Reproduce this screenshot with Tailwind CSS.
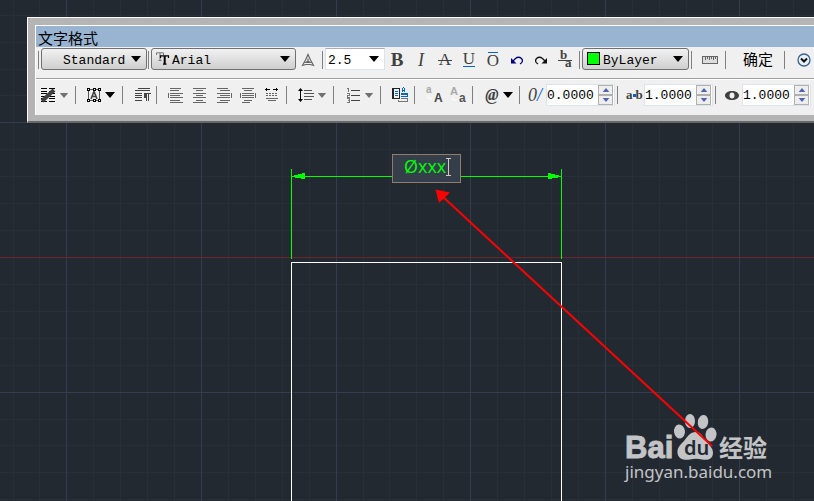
<!DOCTYPE html>
<html lang="zh-CN">
<head>
  <meta charset="UTF-8" />
  <meta name="viewport" content="width=device-width, initial-scale=1.0" />
  <title>文字格式</title>
  <script src="https://cdn.jsdelivr.net/npm/@tailwindcss/browser@4"></script>
</head>
<body class="relative min-h-screen overflow-hidden bg-[#222930] font-['Liberation_Mono','Noto_Sans_CJK_SC',monospace] text-[13px] text-black">

  <!-- shared icons -->
  <svg class="hidden">
    <symbol id="down" viewBox="0 0 10 6"><path d="M0 0h10L5 6z" fill="currentColor" /></symbol>
  </svg>

  <!-- drawing area -->
  <svg class="absolute inset-0 h-full w-full" shape-rendering="crispEdges">
    <path id="gridMinor" stroke="#272f3b" />
    <path id="gridMajor" stroke="#343c4d" />
    <path d="M0 257.500H2000" stroke="#67272d" />
    <path d="M291.500 169V259M561.500 169V259M292 176.500H561" fill="none" stroke="#00ff00" />
    <path d="M292 176.500L304.500 173.500V178.500ZM561 176.500L548.500 173.500V178.500Z" fill="#00ff00" stroke="#00ff00" />
    <path d="M291.500 520V262.500H561.500V520" fill="none" stroke="#fff" />
    <g shape-rendering="auto">
      <g fill="#c3c4c6">
        <ellipse cx="679.500" cy="431.500" rx="5.500" ry="7" transform="rotate(-8 679.500 431.500)" />
        <ellipse cx="690" cy="421" rx="5" ry="7" />
        <ellipse cx="703" cy="422" rx="5.200" ry="7" transform="rotate(10 703 422)" />
        <ellipse cx="711" cy="434.500" rx="5.500" ry="7" transform="rotate(8 711 434.500)" />
        <path d="M696 432C690 432 687 437 684 441C680 445 677 448 677.500 453C678 459 684 460.500 690 459.500C694 458.500 698 458.500 702 459.500C708 460.500 713 459 713 452.500C713 448 709 445 706 441C703 437 701 432 696 432Z" />
        <text x="625" y="458" font-size="31" font-weight="700" font-family="Liberation Sans, sans-serif" stroke="#c3c4c6">Bai</text>
        <text x="719" y="457" font-size="24" font-weight="700" font-family="Noto Sans CJK SC, sans-serif">经验</text>
        <text x="625" y="478" font-size="17" font-family="Noto Sans, sans-serif">jingyan.baidu.com</text>
      </g>
      <text x="684" y="455" font-size="20" font-weight="600" fill="#222930" font-family="Noto Sans, sans-serif">du</text>
      <path d="M442 196L712 446" stroke="#ff0000" stroke-width="2" />
      <path d="M435.500 189.500L450 192.500L439 203Z" fill="#ff0000" />
    </g>
  </svg>

  <!-- in-place text editor -->
  <input aria-label="标注文字" value="Øxxx" class="absolute left-[392px] top-[154px] h-[29px] w-[69px] border border-[#917c6b] bg-[#353f4c] pb-[6px] pl-[11px] font-['Open_Sans',sans-serif] text-[18px] text-[#00ff00]" />
  <svg class="absolute left-[446px] top-[158px] h-[18px] w-[5px]" shape-rendering="crispEdges"><path d="M0 .5h5M0 17.500h5M2.500 0v18" stroke="#d5cabb" /></svg>

  <!-- text formatting toolbar -->
  <section class="relative mt-[17px] ml-[27px] border-t border-b-2 border-l border-t-white border-b-[#686868] border-l-white bg-[#b4b4b4] pt-[7px] pb-[6px] pl-[7px]">
    <div class="border-t border-l border-white bg-[#f0f0f0]">
      <h1 class="h-[21px] overflow-hidden bg-[#99b4d1] pl-[2px] font-['Noto_Sans_CJK_SC',sans-serif] text-[15px] leading-[23px]">文字格式</h1>

      <div class="flex h-8 items-center border-b border-[#a0a0a0] pb-[6px] *:shrink-0">
        <span class="ml-[2px] h-[18px] w-px bg-[#808080]"></span>
        <div class="relative ml-[2px] w-[106px]">
          <select aria-label="样式" class="h-[22px] w-full appearance-none rounded-[3px] border border-[#707070] bg-linear-to-b from-[#f2f2f2] to-[#cfcfcf] pt-[2px] pl-[21px]"><option>Standard</option></select>
          <svg class="pointer-events-none absolute top-2 right-[6px] h-[6px] w-[10px]"><use href="#down" /></svg>
        </div>
        <span class="ml-px h-[18px] w-px bg-[#808080]"></span>
        <div class="relative ml-[2px] w-[145px]">
          <select aria-label="字体" class="h-[22px] w-full appearance-none rounded-[3px] border border-[#707070] bg-linear-to-b from-[#f2f2f2] to-[#cfcfcf] pt-[2px] pl-5"><option>Arial</option></select>
          <svg class="pointer-events-none absolute top-1 left-[5px] h-[14px] w-[14px]" viewBox="0 0 14 14" fill="none">
            <path d="M.5 3V.8h7V3M4 1v7M2.500 8.500h3" stroke="#777" />
            <path d="M4.500 6V3.800h8V6M7 12.200h3.500" stroke="#000" stroke-width="1.200" /><path d="M8.700 4v8" stroke="#000" stroke-width="2" />
          </svg>
          <svg class="pointer-events-none absolute top-2 right-[6px] h-[6px] w-[10px]"><use href="#down" /></svg>
        </div>
        <button aria-label="注释性" class="flex h-6 w-6 items-center justify-center">
          <svg class="h-[14px] w-[14px]" viewBox="0 0 14 14" fill="none" stroke="#666" stroke-width="1.200"><path d="M7 1.500L4.500 7L1.500 12.300L5 11.500H9L12.500 12.300L9.500 7ZM7 5.500V8M5 9.500L7 8L9 9.500Z" /></svg>
        </button>
        <span class="ml-[2px] h-[18px] w-px bg-[#808080]"></span>
        <div class="relative ml-[2px] w-[60px]">
          <select aria-label="文字高度" class="h-[22px] w-full appearance-none border border-[#dde3ec] border-t-[#abadb3] bg-white pt-[2px] pl-[2px]"><option>2.5</option></select>
          <svg class="pointer-events-none absolute top-2 right-[6px] h-[6px] w-[10px]"><use href="#down" /></svg>
        </div>
        <button class="h-6 w-6 font-['Liberation_Serif',serif] text-[19px] leading-6 font-bold text-[#404040]">B</button>
        <button class="h-6 w-6 font-['Liberation_Serif',serif] text-[18px] leading-6 text-[#404040] italic">I</button>
        <button aria-label="删除线" class="relative h-6 w-6 font-['Liberation_Serif',serif] text-[17px] leading-6 text-[#404040]">A<span class="absolute top-3 left-[5px] h-px w-[14px] bg-[#404040]"></span></button>
        <button aria-label="下划线" class="relative h-6 w-6 pb-[2px] font-['Liberation_Serif',serif] text-[17px] leading-[22px] text-[#404040]">U<span class="absolute bottom-[5px] left-[6px] h-px w-3 bg-[#0066cc]"></span></button>
        <button aria-label="上划线" class="relative h-6 w-6 pt-[2px] font-['Liberation_Serif',serif] text-[17px] leading-[22px] text-[#404040]">O<span class="absolute top-1 left-[7px] h-px w-[10px] bg-[#0066cc]"></span></button>
        <button aria-label="放弃" class="flex h-6 w-6 items-center justify-center">
          <svg class="h-[14px] w-[14px]" viewBox="0 0 14 14" fill="none" stroke="#000080" stroke-width="1.300"><path d="M3 8L5.500 5.500Q8.500 3 11.500 5.500Q14 8.500 10 11" /><path d="M1 5v5.500h5.500z" fill="#000080" stroke="none" /></svg>
        </button>
        <button aria-label="重做" class="flex h-6 w-6 items-center justify-center">
          <svg class="h-[14px] w-[14px]" viewBox="0 0 14 14" fill="none" stroke="#111" stroke-width="1.300"><path d="M11 8L8.500 5.500Q5.500 3 2.500 5.500Q0 8.500 4 11" /><path d="M13 5v5.500H7.500z" fill="#111" stroke="none" /></svg>
        </button>
        <button aria-label="堆叠" class="flex h-6 w-6 items-center justify-center">
          <svg class="h-4 w-4 overflow-visible" viewBox="0 0 16 16" fill="#404040" font-family="Liberation Serif, serif" font-weight="700" font-size="13"><text x="3" y="7">b</text><text x="8" y="15">a</text><path d="M1 8h14v1H1z" /></svg>
        </button>
        <span class="ml-[2px] h-[18px] w-px bg-[#808080]"></span>
        <div class="relative ml-[2px] w-[107px]">
          <select aria-label="颜色" class="h-[22px] w-full appearance-none rounded-[3px] border border-[#707070] bg-linear-to-b from-[#f2f2f2] to-[#cfcfcf] pt-[2px] pl-5"><option>ByLayer</option></select>
          <span class="pointer-events-none absolute top-1 left-[5px] h-[13px] w-[13px] border border-black bg-[#00ff00]"></span>
          <svg class="pointer-events-none absolute top-2 right-[6px] h-[6px] w-[10px]"><use href="#down" /></svg>
        </div>
        <span class="ml-[2px] h-[18px] w-px bg-[#808080]"></span>
        <button aria-label="标尺" class="ml-1 flex h-6 w-7 items-center justify-center">
          <svg class="h-2 w-4" viewBox="0 0 16 8" fill="none" stroke="#666" shape-rendering="crispEdges"><path d="M.5 .5h15v7H.5z" fill="#ddd" /><path d="M3.500 1v3M5.500 1v2M7.500 1v3M9.500 1v2M11.500 1v3M13.500 1v2" /></svg>
        </button>
        <span class="ml-px h-[18px] w-px bg-[#808080]"></span>
        <button class="h-6 w-[58px] pb-[2px] pl-[6px] font-['Noto_Sans_CJK_SC',sans-serif] text-[15px] leading-[22px]">确定</button>
        <span class="h-[18px] w-px bg-[#808080]"></span>
        <button aria-label="选项" class="ml-px flex h-6 w-9 items-center justify-center">
          <svg class="h-[14px] w-[14px]" viewBox="0 0 14 14" fill="none"><circle cx="7" cy="7" r="6" fill="#e8f1fa" stroke="#3c5f8c" stroke-width="1.300" /><path d="M4 5.500L7 8.500L10 5.500" stroke="#111" stroke-width="2" /></svg>
        </button>
      </div>

      <div class="flex h-9 items-center border-t border-white pb-[5px] *:shrink-0">
        <button aria-label="栏" class="ml-1 flex h-6 items-center gap-[3px] text-[#707070]">
          <svg class="h-4 w-4" viewBox="0 0 16 16" fill="none" stroke="#000"><path d="M1 1.500h6M9 1.500h6M1 4.500h6M9 4.500h6M1 6.500h6M9 6.500h6M1 9.500h6M9 9.500h6M1 11.500h6M9 11.500h6M1 14.500h6M9 14.500h6" shape-rendering="crispEdges" /><path d="M2 14L14 3" stroke="#404040" stroke-width="4" /></svg>
          <svg class="h-[5px] w-[10px]"><use href="#down" /></svg>
        </button>
        <span class="ml-[6px] h-[18px] w-px bg-[#808080]"></span>
        <button aria-label="多行文字对正" class="ml-[10px] flex h-6 items-center gap-[3px]">
          <svg class="h-4 w-4" viewBox="0 0 16 16" fill="none" stroke="#222"><path d="M2.500 2.500h11v11h-11z" stroke="#555" shape-rendering="crispEdges" /><path d="M5 12L8 4.500L11 12M6 9.500h4" stroke="#444" stroke-width="1.600" /><path d="M1.500 1.500h2v2h-2zM7.500 1.500h2v2h-2zM12.500 1.500h2v2h-2zM1.500 12.500h2v2h-2zM7.500 12.500h2v2h-2zM12.500 12.500h2v2h-2z" stroke="#000" fill="#fff" shape-rendering="crispEdges" /></svg>
          <svg class="h-[6px] w-[10px]"><use href="#down" /></svg>
        </button>
        <span class="ml-[7px] h-[18px] w-px bg-[#808080]"></span>
        <button aria-label="段落" class="ml-2 flex h-6 w-6 items-center justify-center">
          <svg class="h-4 w-4" viewBox="0 0 16 16" fill="none" stroke="#444" shape-rendering="crispEdges"><path d="M3 1.500h12M0 3.500h15M0 6.500h7M0 8.500h7M0 10.500h7M0 13.500h7M10 6.500h6M11.500 6v8M13.500 6v8" /><path d="M11 6H9v4h2z" fill="#444" /></svg>
        </button>
        <span class="ml-px h-[18px] w-px bg-[#808080]"></span>
        <button aria-label="左对齐" class="ml-[7px] flex h-6 w-6 items-center justify-center">
          <svg class="h-4 w-4" viewBox="0 0 16 16" stroke="#666" shape-rendering="crispEdges"><path d="M2 1.500h11M2 3.500h9M2 6.500h13M2 8.500h10M2 10.500h13M2 13.500h10M2 15.500h13M.5 6v5" /></svg>
        </button>
        <button aria-label="居中" class="flex h-6 w-6 items-center justify-center">
          <svg class="h-4 w-4" viewBox="0 0 16 16" stroke="#666" shape-rendering="crispEdges"><path d="M1 1.500h13M4 3.500h7M1 6.500h13M4 8.500h7M1 10.500h13M4 13.500h7M1 15.500h13" /></svg>
        </button>
        <button aria-label="右对齐" class="flex h-6 w-6 items-center justify-center">
          <svg class="h-4 w-4" viewBox="0 0 16 16" stroke="#666" shape-rendering="crispEdges"><path d="M1 1.500h11M4 3.500h10M1 6.500h13M4 8.500h10M1 10.500h13M4 13.500h10M1 15.500h11M15.500 6v5" /></svg>
        </button>
        <button aria-label="对正" class="flex h-6 w-6 items-center justify-center">
          <svg class="h-4 w-4" viewBox="0 0 16 16" stroke="#666" shape-rendering="crispEdges"><path d="M2 1.500h12M4 3.500h8M2 6.500h12M2 8.500h12M2 10.500h12M4 13.500h8M2 15.500h8M.5 6v5M15.500 6v5" /></svg>
        </button>
        <button aria-label="分布" class="flex h-6 w-6 items-center justify-center">
          <svg class="h-4 w-4" viewBox="0 0 16 16" stroke="#666" shape-rendering="crispEdges"><path d="M1 2.500h5M9 2.500h5M2.500 1v3M12.500 1v3" stroke="#000" /><path d="M2 6.500h12M2 8.500h12" stroke-dasharray="2 1" /><path d="M2 11.500h12M4 13.500h8" /></svg>
        </button>
        <span class="ml-[2px] h-[18px] w-px bg-[#808080]"></span>
        <button aria-label="行距" class="ml-[11px] flex h-6 items-center gap-[3px] text-[#707070]">
          <svg class="h-4 w-4" viewBox="0 0 16 16" stroke="#555"><path d="M6 3.500h8M6 6.500h10M6 9.500h10M6 12.500h8" shape-rendering="crispEdges" /><path d="M2.500 2v12" stroke="#000" /><path d="M0 4L2.500 1L5 4zM0 12L2.500 15L5 12z" fill="#000" stroke="none" /></svg>
          <svg class="h-[5px] w-[10px]"><use href="#down" /></svg>
        </button>
        <span class="ml-[6px] h-[18px] w-px bg-[#808080]"></span>
        <button aria-label="编号" class="ml-[11px] flex h-6 items-center gap-[3px] text-[#707070]">
          <svg class="h-4 w-4" viewBox="0 0 16 16" fill="none" stroke="#444" shape-rendering="crispEdges"><path d="M6 3.500h9M6 8.500h9M6 13.500h9" /><path d="M3.500 1v4M2 1.500h1M2 6.500h2v2H2.500v2H5M2 11.500h2v4H2M3 13.500h1" stroke="#777" /></svg>
          <svg class="h-[5px] w-[10px]"><use href="#down" /></svg>
        </button>
        <span class="ml-[6px] h-[18px] w-px bg-[#808080]"></span>
        <button aria-label="插入字段" class="ml-[7px] flex h-6 w-6 items-center justify-center">
          <svg class="h-4 w-4" viewBox="0 0 16 16" fill="none" stroke="#0066cc" shape-rendering="crispEdges"><path d="M.5 1.500h7v10h-7zM1.500 2v9" stroke="#222" /><path d="M3 4.500h3M3 6.500h3M3 8.500h3M10.500 5V1M12.500 5V1M11 .5h1M11 3.500h1M9 6.500h6v3H9M9 7.500h6" /><path d="M6 12.500v2h9v-3H9" stroke="#777" /></svg>
        </button>
        <span class="ml-[2px] h-[18px] w-px bg-[#808080]"></span>
        <button aria-label="大写" class="ml-[7px] flex h-6 w-6 items-center justify-center">
          <svg class="h-4 w-4 overflow-visible" viewBox="0 0 16 16" font-family="Liberation Sans, sans-serif" font-weight="700"><text x="0" y="6" font-size="10" fill="#aaa">a</text><text x="8" y="15" font-size="12" fill="#444">A</text><path d="M2 8v3h3v2" fill="none" stroke="#fff" /></svg>
        </button>
        <button aria-label="小写" class="flex h-6 w-6 items-center justify-center">
          <svg class="h-4 w-4 overflow-visible" viewBox="0 0 16 16" font-family="Liberation Sans, sans-serif" font-weight="700"><text x="0" y="8" font-size="11" fill="#aaa">A</text><text x="9" y="15" font-size="12" fill="#555">a</text><path d="M3 10v3h4" fill="none" stroke="#fff" /></svg>
        </button>
        <span class="ml-[2px] h-[18px] w-px bg-[#808080]"></span>
        <button aria-label="符号" class="ml-[11px] flex h-6 items-center gap-[3px]">
          <span class="w-4 font-['Liberation_Serif',serif] text-[16px] leading-4 font-bold text-[#404040] italic">@</span>
          <svg class="h-[6px] w-[10px]"><use href="#down" /></svg>
        </button>
        <span class="ml-[6px] h-[18px] w-px bg-[#808080]"></span>

        <label for="oblique" class="ml-2 w-4 font-['Liberation_Serif',serif] text-[18px] leading-6 text-[#404040] italic">0<span class="text-[#0066cc]">/</span></label>
        <div class="ml-[2px] flex h-[22px] w-[69px] items-center border border-[#dde3ec] bg-white pr-px">
          <input id="oblique" value="0.0000" class="w-[51px] min-w-0 pt-[2px]" />
          <div class="flex w-[15px] flex-col text-[#5064b4]">
            <button aria-label="增加" class="flex h-[10px] items-center justify-center border border-[#b0b0b0] bg-[#eee]"><svg class="h-1 w-2 rotate-180" viewBox="0 0 10 6"><use href="#down" /></svg></button>
            <button aria-label="减少" class="flex h-[10px] items-center justify-center border border-[#b0b0b0] bg-[#eee]"><svg class="h-1 w-2" viewBox="0 0 10 6"><use href="#down" /></svg></button>
          </div>
        </div>
        <span class="ml-[2px] h-[18px] w-px bg-[#808080]"></span>

        <label for="tracking" class="ml-2 flex w-4 items-center font-['Liberation_Serif',serif] text-[13px] leading-6 font-bold text-[#404040]">a<span class="h-[3px] w-[3px] shrink-0 bg-[#0066cc]"></span>b</label>
        <div class="ml-[2px] flex h-[22px] w-[69px] items-center border border-[#dde3ec] bg-white pr-px">
          <input id="tracking" value="1.0000" class="w-[51px] min-w-0 pt-[2px]" />
          <div class="flex w-[15px] flex-col text-[#5064b4]">
            <button aria-label="增加" class="flex h-[10px] items-center justify-center border border-[#b0b0b0] bg-[#eee]"><svg class="h-1 w-2 rotate-180" viewBox="0 0 10 6"><use href="#down" /></svg></button>
            <button aria-label="减少" class="flex h-[10px] items-center justify-center border border-[#b0b0b0] bg-[#eee]"><svg class="h-1 w-2" viewBox="0 0 10 6"><use href="#down" /></svg></button>
          </div>
        </div>
        <span class="ml-[2px] h-[18px] w-px bg-[#808080]"></span>

        <label for="widthFactor" aria-label="宽度因子" class="ml-2 w-4">
          <svg class="h-4 w-4" viewBox="0 0 16 16"><path d="M8 4C12 4 15 6 15 8.500S12 13 8 13S1 11 1 8.500S4 4 8 4ZM8 5.500C6.500 5.500 5.500 6.500 5.500 8.500S6.500 11.500 8 11.500S10.500 10.500 10.500 8.500S9.500 5.500 8 5.500Z" fill="#404040" fill-rule="evenodd" /></svg>
        </label>
        <div class="ml-[2px] flex h-[22px] w-[69px] items-center border border-[#dde3ec] bg-white pr-px">
          <input id="widthFactor" value="1.0000" class="w-[51px] min-w-0 pt-[2px]" />
          <div class="flex w-[15px] flex-col text-[#5064b4]">
            <button aria-label="增加" class="flex h-[10px] items-center justify-center border border-[#b0b0b0] bg-[#eee]"><svg class="h-1 w-2 rotate-180" viewBox="0 0 10 6"><use href="#down" /></svg></button>
            <button aria-label="减少" class="flex h-[10px] items-center justify-center border border-[#b0b0b0] bg-[#eee]"><svg class="h-1 w-2" viewBox="0 0 10 6"><use href="#down" /></svg></button>
          </div>
        </div>
      </div>
    </div>
  </section>

  <script>
    // grid: every fifth line is a major one, counted from the origin
    const step = 26.92;
    let minor = "";
    let major = "";

    for (let k = -10; k < 80; k++) {
      const x = Math.round(66.4 + k * step) + 0.5;
      const y = Math.round(257 + k * step) + 0.5;
      const d = `M${x} 0V2000M0 ${y}H2000`;
      if (k % 5 === 0) major += d;
      else minor += d;
    }

    document.getElementById("gridMinor").setAttribute("d", minor);
    document.getElementById("gridMajor").setAttribute("d", major);
  </script>
</body>
</html>
